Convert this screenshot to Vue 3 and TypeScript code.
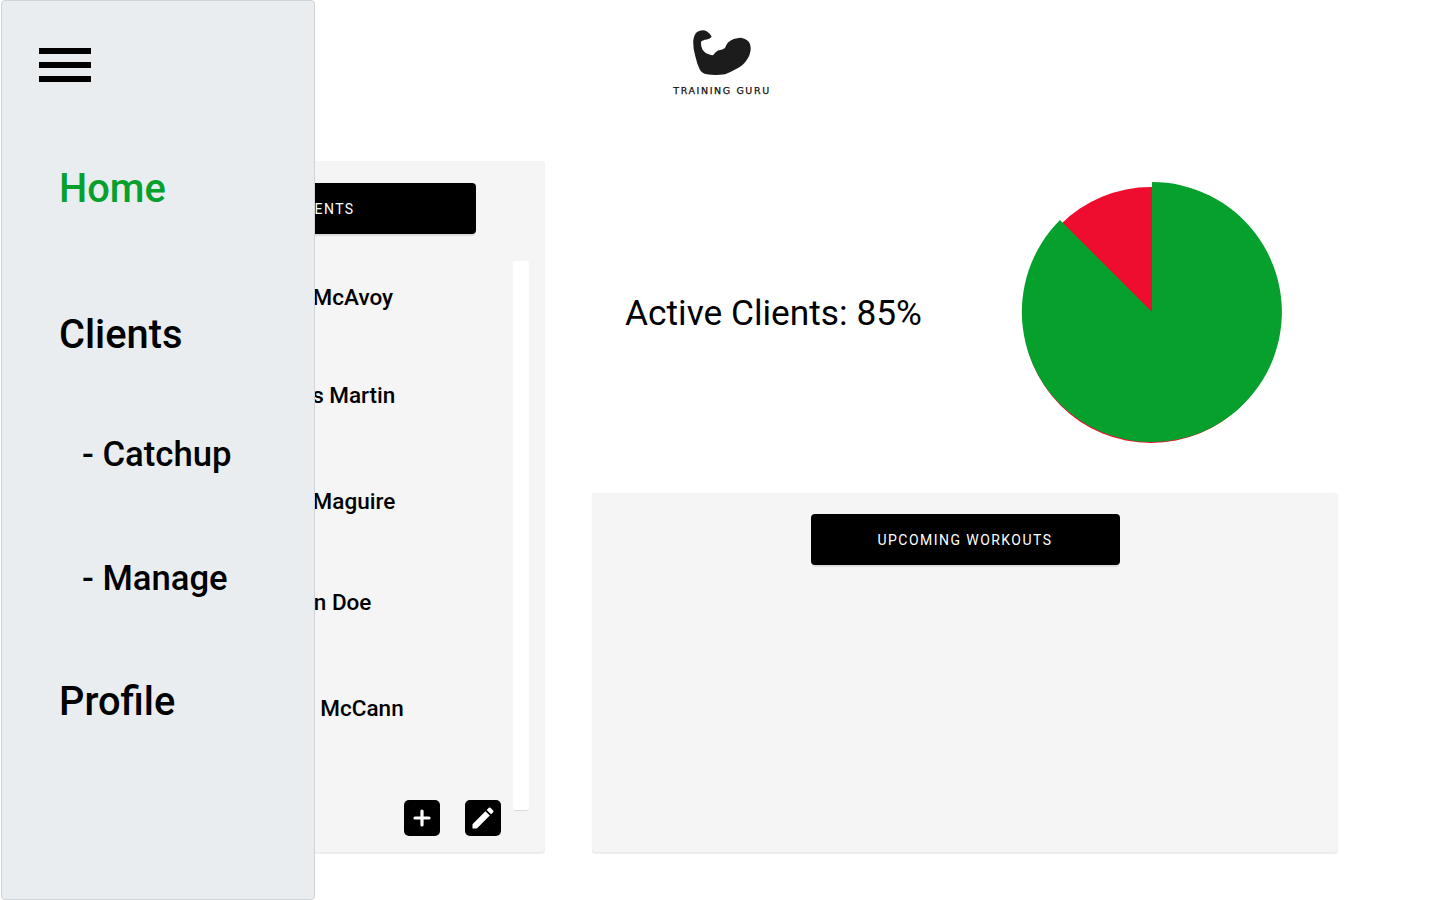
<template>
  <div class="page">
    <aside class="sidebar">
      <div class="burger">
        <span></span>
        <span></span>
        <span></span>
      </div>
      <nav class="nav">
        <a class="nav-item home active">Home</a>
        <a class="nav-item clients">Clients</a>
        <a class="nav-item sub catchup">- Catchup</a>
        <a class="nav-item sub manage">- Manage</a>
        <a class="nav-item profile">Profile</a>
      </nav>
    </aside>

    <header class="header">
      <div class="logo">
        <svg class="logo-mark" viewBox="0 0 64 50" width="64" height="50">
          <path
            d="M23.3 27Q25 24 28 22.5Q33 21.5 35 20Q36 17 38 14.5Q43 10 51 9.7Q58 11 60 16Q62 23 58 30Q54 37 48 40Q41 44 35 46.3Q25 47.5 17 46.3Q12 45.5 10 42Q7 36 5.5 29Q3 21 3.2 14Q3.5 7 7 4Q11 1.5 15 2.5Q20 5 21.7 8.7Q20 11 17 11.5Q12 12 11 14Q10.5 18 12.7 22Q15 25 18 26Q21 27.5 23.3 27Z"
            fill="#1c1c1c"
          />
        </svg>
        <span class="logo-text">TRAINING GURU</span>
      </div>
    </header>

    <main class="content">
      <section class="panel clients-panel">
        <button class="black-btn clients-btn">YOUR CLIENTS</button>
        <div class="clients-body">
          <ul class="client-list">
            <li
              v-for="client in clients"
              :key="client.name"
              class="client"
              :style="{ height: client.height + 'px' }"
            >
              {{ client.name }}
            </li>
          </ul>
          <div class="scrollbar"></div>
        </div>
        <div class="actions">
          <button class="icon-btn" aria-label="Add client">
            <svg viewBox="0 0 24 24" width="24" height="24">
              <path d="M12 5v14M5 12h14" stroke="#fff" stroke-width="3.2" stroke-linecap="round" fill="none" />
            </svg>
          </button>
          <button class="icon-btn" aria-label="Edit client">
            <svg viewBox="0 0 24 24" width="28" height="28">
              <path
                d="M3 17.25V21h3.75L17.81 9.94l-3.75-3.75L3 17.25zM20.71 7.04a1 1 0 0 0 0-1.41l-2.34-2.34a1 1 0 0 0-1.41 0l-1.83 1.83 3.75 3.75 1.83-1.83z"
                fill="#fff"
              />
            </svg>
          </button>
        </div>
      </section>

      <div class="right">
        <section class="stats">
          <p class="stat-text">Active Clients: {{ activePercent }}%</p>
          <svg class="pie" viewBox="0 0 264 264" width="264" height="264">
            <circle cx="131" cy="135" r="128" fill="#ee0d2f" />
            <path d="M132 132L132 2A130 130 0 1 1 40 40Z" fill="#05a12c" />
          </svg>
        </section>
        <section class="panel workouts-panel">
          <button class="black-btn workouts-btn">UPCOMING WORKOUTS</button>
        </section>
      </div>
    </main>
  </div>
</template>

<script setup lang="ts">
interface Client {
  name: string
  height: number
}

const activePercent = 85

const clients: Client[] = [
  { name: 'Ian McAvoy', height: 98 },
  { name: 'Jess Martin', height: 106 },
  { name: 'Ian Maguire', height: 101 },
  { name: 'John Doe', height: 106 },
  { name: 'Ben McCann', height: 100 },
]
</script>

<style>
html,
body {
  background: #fff;
}
</style>

<style scoped>
.page {
  position: relative;
  height: 900px;
  overflow: hidden;
  font-family: Roboto, "Liberation Sans", sans-serif;
  color: #000;
}

.sidebar {
  position: absolute;
  top: 0;
  left: 1px;
  z-index: 2;
  box-sizing: border-box;
  width: 314px;
  height: 900px;
  padding: 47px 0 0 37px;
  background: #e9edf0;
  border: 1px solid #cfd4d8;
  border-radius: 4px;
}

.burger {
  display: flex;
  flex-direction: column;
  gap: 8px;
  width: 52px;
}

.burger span {
  height: 6px;
  background: #000;
}

.nav {
  display: flex;
  flex-direction: column;
  margin-top: 83px;
  padding-left: 20px;
}

.nav-item {
  display: block;
  height: 48px;
  font-size: 39.8px;
  font-weight: 500;
  line-height: 48px;
}

.active {
  color: #05a12c;
}

.sub {
  padding-left: 23px;
  font-size: 34.7px;
}

.clients {
  margin-top: 98px;
}

.catchup {
  margin-top: 71px;
}

.manage {
  margin-top: 76px;
}

.profile {
  margin-top: 76px;
}

.header {
  display: flex;
  justify-content: center;
  box-sizing: border-box;
  height: 161px;
  padding: 28px 0 0 4px;
}

.logo {
  display: flex;
  flex-direction: column;
  align-items: center;
  width: 108px;
}

.logo-mark {
  margin-bottom: 7px;
}

.logo-text {
  font-family: "DejaVu Sans", sans-serif;
  font-size: 9.5px;
  line-height: 12px;
  letter-spacing: 1.6px;
  white-space: nowrap;
  color: #111;
  -webkit-text-stroke: 0.25px #111;
}

.content {
  display: flex;
  gap: 47px;
  margin-left: 47px;
  height: 691px;
}

.panel {
  box-sizing: border-box;
  background: #f5f5f5;
  border-radius: 4px;
  box-shadow: 0 2px 1px rgba(0, 0, 0, 0.07), 0 0 1px rgba(0, 0, 0, 0.1);
}

.clients-panel {
  display: flex;
  flex-direction: column;
  width: 498px;
  padding-top: 22px;
}

.black-btn {
  display: block;
  height: 51px;
  border: 0;
  border-radius: 4px;
  background: #000;
  color: #fff;
  font-family: inherit;
  font-size: 14px;
  font-weight: 400;
  letter-spacing: 1.45px;
  box-shadow: 0 3px 1px -1px rgba(0, 0, 0, 0.1);
}

.clients-btn {
  width: 354px;
  margin-left: 75px;
}

.clients-body {
  display: flex;
  justify-content: space-between;
  height: 549px;
  margin-top: 27px;
  padding-right: 16px;
}

.client-list {
  margin: 0;
  padding: 0 0 0 229px;
  list-style: none;
}

.client {
  box-sizing: border-box;
  padding-top: 23px;
  font-size: 22.5px;
  font-weight: 500;
  line-height: 26px;
  white-space: nowrap;
}

.scrollbar {
  width: 16px;
  height: 549px;
  background: #fff;
  border-radius: 3px;
  box-shadow: 0 2px 1px -1px rgba(0, 0, 0, 0.12);
}

.actions {
  display: flex;
  justify-content: flex-end;
  gap: 25px;
  margin-top: -10px;
  padding-right: 44px;
}

.icon-btn {
  display: flex;
  align-items: center;
  justify-content: center;
  width: 36px;
  height: 36px;
  padding: 0;
  border: 0;
  border-radius: 5px;
  background: #000;
}

.right {
  display: flex;
  flex-direction: column;
  width: 746px;
}

.stats {
  display: flex;
  align-items: center;
  height: 332px;
}

.stat-text {
  width: 395px;
  margin: 0 0 28px 33px;
  font-size: 35.3px;
  font-weight: 400;
  line-height: 42px;
  white-space: nowrap;
}

.pie {
  margin: 0 0 30px 0;
}

.workouts-panel {
  flex: 1;
  padding-top: 21px;
}

.workouts-btn {
  width: 309px;
  margin: 0 auto;
}
</style>
